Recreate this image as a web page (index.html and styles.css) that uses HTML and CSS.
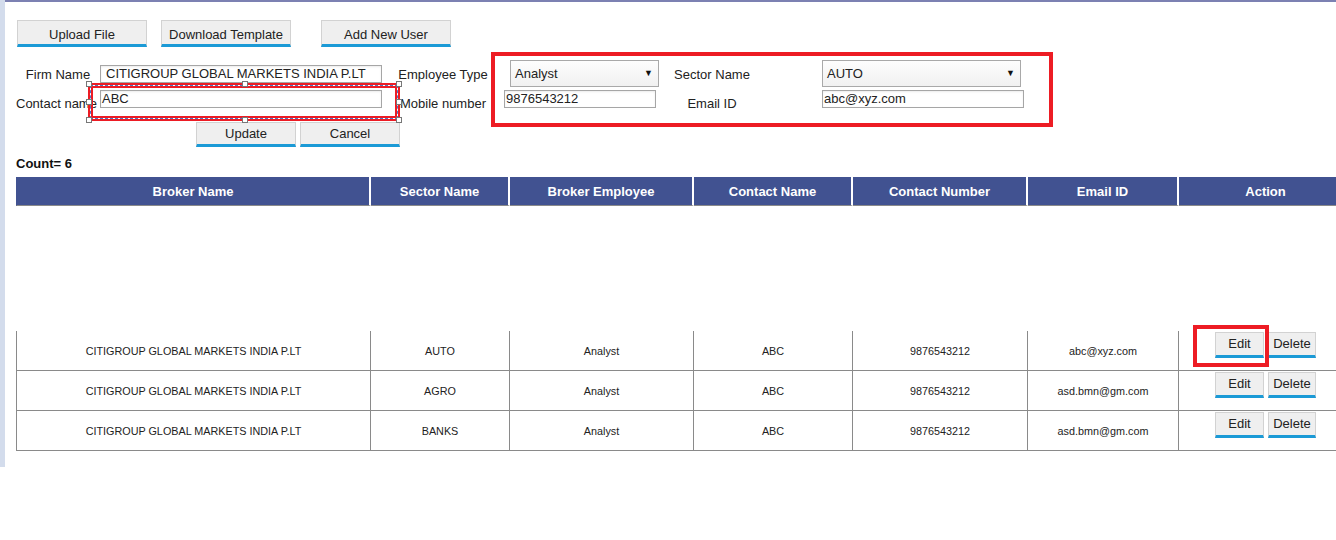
FILE: index.html
```html
<!DOCTYPE html>
<html>
<head>
<meta charset="utf-8">
<link rel="stylesheet" href="styles.css">
</head>
<body>
<div class="page">
  <div class="strip"></div>
  <div class="main">
    <div class="toolbar">
      <button class="btn btn-top">Upload File</button>
      <button class="btn btn-top">Download Template</button>
      <button class="btn btn-top btn-add">Add New User</button>
    </div>

    <div class="form">
      <label class="lbl">Firm Name</label>
      <div class="txt firm">CITIGROUP GLOBAL MARKETS INDIA P.LT</div>
      <label class="lbl">Employee Type</label>
      <div class="select sel-type"><span>Analyst</span><span class="arrow">▼</span></div>
      <label class="lbl">Sector Name</label>
      <div class="select sel-sector"><span>AUTO</span><span class="arrow">▼</span></div>

      <label class="lbl lbl-contact">Contact name</label>
      <div class="txt contact r2">ABC</div>
      <label class="lbl">Mobile number</label>
      <div class="txt mobile r2">9876543212</div>
      <label class="lbl">Email ID</label>
      <div class="txt email r2">abc@xyz.com</div>
    </div>

    <div class="actions">
      <button class="btn btn-form">Update</button>
      <button class="btn btn-form">Cancel</button>
    </div>

    <div class="count">Count= 6</div>

    <table class="grid">
      <colgroup>
        <col class="c1"><col class="c2"><col class="c3"><col class="c4"><col class="c5"><col class="c6"><col class="c7">
      </colgroup>
      <thead>
        <tr>
          <th>Broker Name</th><th>Sector Name</th><th>Broker Employee</th><th>Contact Name</th><th>Contact Number</th><th>Email ID</th><th>Action</th>
        </tr>
      </thead>
      <tbody>
        <tr class="spacer"><td colspan="7"></td></tr>
        <tr class="row">
          <td>CITIGROUP GLOBAL MARKETS INDIA P.LT</td><td>AUTO</td><td>Analyst</td><td>ABC</td><td>9876543212</td><td>abc@xyz.com</td>
          <td class="act"><button class="btn btn-row">Edit</button><button class="btn btn-row btn-del">Delete</button></td>
        </tr>
        <tr class="row">
          <td>CITIGROUP GLOBAL MARKETS INDIA P.LT</td><td>AGRO</td><td>Analyst</td><td>ABC</td><td>9876543212</td><td>asd.bmn@gm.com</td>
          <td class="act"><button class="btn btn-row">Edit</button><button class="btn btn-row btn-del">Delete</button></td>
        </tr>
        <tr class="row">
          <td>CITIGROUP GLOBAL MARKETS INDIA P.LT</td><td>BANKS</td><td>Analyst</td><td>ABC</td><td>9876543212</td><td>asd.bmn@gm.com</td>
          <td class="act"><button class="btn btn-row">Edit</button><button class="btn btn-row btn-del">Delete</button></td>
        </tr>
      </tbody>
    </table>
  </div>

  <div class="mark mark-form"></div>
  <div class="mark mark-edit"></div>
  <div class="selbox">
    <div class="selbox-dash"><div class="selbox-inner"></div></div>
    <span class="h h-tl"></span><span class="h h-tm"></span><span class="h h-tr"></span>
    <span class="h h-ml"></span><span class="h h-mr"></span>
    <span class="h h-bl"></span><span class="h h-bm"></span><span class="h h-br"></span>
  </div>
</div>
</body>
</html>
```

FILE: styles.css
```css
html, body {
  margin: 0;
  padding: 0;
  background: #fff;
  overflow: hidden;
}
body {
  font-family: "Liberation Sans", Arial, sans-serif;
  font-size: 13px;
  color: #222;
}
.page {
  position: relative;
  display: flex;
  width: 1336px;
  height: 540px;
}
.strip {
  width: 5px;
  height: 467px;
  background: #d3dcec;
  flex: none;
}
.main {
  flex: 1;
  min-width: 0;
  overflow: hidden;
  border-top: 2px solid #7c81b2;
  padding-left: 11px;
}
.btn {
  font-family: "Liberation Sans", Arial, sans-serif;
  font-size: 13px;
  color: #222;
  background: #efefef;
  border: 1px solid #d2d2d2;
  border-bottom: 3px solid #1b9ad6;
  padding: 0;
  margin: 0;
  box-sizing: border-box;
  cursor: pointer;
}
.toolbar {
  display: flex;
  margin-top: 18px;
  padding-left: 1px;
  gap: 14px;
}
.btn-top {
  width: 130px;
  height: 27px;
  padding-top: 3px;
}
.btn-add {
  margin-left: 16px;
}
.form {
  display: grid;
  grid-template-columns: 84px 282px 122px 155px 106px 300px;
  grid-template-rows: 28px 30px;
  margin-top: 13px;
  align-items: center;
}
.lbl {
  text-align: center;
  white-space: nowrap;
}
.lbl-contact {
  text-align: left;
}
.txt {
  box-sizing: border-box;
  height: 18px;
  border: 1px solid #a6a6a6;
  background: #fff;
  box-shadow: inset 0 1px 2px rgba(0, 0, 0, 0.08);
  line-height: 16px;
  white-space: nowrap;
  overflow: hidden;
  padding-left: 1px;
}
.txt.r2 {
  align-self: start;
  margin-top: 2px;
  line-height: 15px;
}
.firm {
  width: 282px;
  padding-left: 5px;
  margin-top: -1px;
}
.contact {
  width: 282px;
}
.mobile {
  width: 152px;
}
.email {
  width: 202px;
  margin-left: 57px;
}
.select {
  box-sizing: border-box;
  height: 27px;
  border: 1px solid #a9a9a9;
  background: linear-gradient(#fdfdfd, #f1f1f1);
  display: flex;
  align-items: center;
  justify-content: space-between;
  padding: 0 5px 1px 4px;
  margin-top: -1px;
}
.sel-type {
  width: 149px;
  margin-left: 6px;
}
.sel-sector {
  width: 199px;
  margin-left: 57px;
}
.arrow {
  font-size: 9px;
  color: #111;
}
.actions {
  display: flex;
  gap: 4px;
  margin-top: 4px;
  padding-left: 180px;
}
.btn-form {
  width: 100px;
  height: 25px;
  padding-bottom: 1px;
}
.count {
  font-weight: bold;
  font-size: 13px;
  margin-top: 9px;
  line-height: 15px;
  color: #111;
}
.grid {
  margin-top: 6px;
  border-collapse: separate;
  border-spacing: 0;
  width: 1336px;
  table-layout: fixed;
}
.c1 { width: 355px; }
.c2 { width: 139px; }
.c3 { width: 184px; }
.c4 { width: 159px; }
.c5 { width: 175px; }
.c6 { width: 151px; }
.c7 { width: 173px; }
.grid th {
  background: #415291;
  color: #fff;
  font-weight: bold;
  font-size: 13px;
  height: 29px;
  padding: 0;
  border-right: 2px solid #fff;
  border-bottom: 1px solid #8a8a8a;
  box-sizing: border-box;
}
.grid th:first-child {
  border-left: 1px solid #415291;
}
.grid th:last-child {
  border-right: none;
}
.spacer td {
  height: 125px;
  padding: 0;
}
.row td {
  height: 40px;
  box-sizing: border-box;
  padding: 0;
  text-align: center;
  font-size: 10.8px;
  color: #222;
  border-right: 1px solid #8a8a8a;
  border-bottom: 1px solid #8a8a8a;
}
.row td:first-child {
  border-left: 1px solid #8a8a8a;
}
.row td.act {
  vertical-align: top;
  padding-top: 1px;
  border-right: none;
}
.btn-row {
  width: 49px;
  height: 26px;
  font-size: 13px;
  margin: 0 2px;
  padding-bottom: 2px;
}
.btn-del {
  width: 48px;
}
.mark {
  position: absolute;
  border: 4px solid #ed1c24;
  box-sizing: border-box;
}
.mark-form {
  left: 491px;
  top: 52px;
  width: 562px;
  height: 75px;
}
.mark-edit {
  left: 1193px;
  top: 325px;
  width: 76px;
  height: 42px;
}
.selbox {
  position: absolute;
  left: 88px;
  top: 83px;
  width: 312px;
  height: 38px;
  box-sizing: border-box;
  border: 2px solid #ed1c24;
}
.selbox-dash {
  box-sizing: border-box;
  width: 100%;
  height: 100%;
  border: 1px dashed #4d79c7;
}
.selbox-inner {
  box-sizing: border-box;
  width: 100%;
  height: 100%;
  border: 2px solid #ed1c24;
}
.h {
  position: absolute;
  width: 4px;
  height: 4px;
  background: #fff;
  border: 1px solid #777;
}
.h-tl { left: -4px; top: -4px; }
.h-tm { left: 152px; top: -4px; }
.h-tr { right: -4px; top: -4px; }
.h-ml { left: -4px; top: 14px; }
.h-mr { right: -4px; top: 14px; }
.h-bl { left: -4px; bottom: -4px; }
.h-bm { left: 152px; bottom: -4px; }
.h-br { right: -4px; bottom: -4px; }
```
